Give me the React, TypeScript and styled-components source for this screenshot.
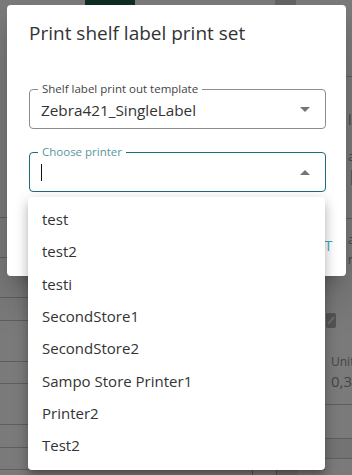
import React from "react";
import styled, { createGlobalStyle } from "styled-components";

const GlobalStyle = createGlobalStyle`
  html, body {
    margin: 0;
    padding: 0;
  }

  body {
    font-family: "Open Sans", "Liberation Sans", sans-serif;
    color: #333;
  }
`;

const Screen = styled.div`
  position: relative;
  width: 352px;
  height: 475px;
  overflow: hidden;
  background: #f5f5f5;
`;

// page behind the modal
const Page = styled.div`
  display: grid;
  grid-template-columns: 1fr 27px;
  height: 100%;
`;

const MainPane = styled.div`
  display: flex;
  flex-direction: column;
`;

const TopBar = styled.div`
  display: flex;
  align-items: flex-start;
  height: 60px;
  padding-left: 85px;
  gap: 140px;
`;

const TopBlock = styled.div<{ $width: number; $color: string }>`
  width: ${(props) => props.$width}px;
  height: 36px;
  background: ${(props) => props.$color};
`;

const TableRow = styled.div<{ $height: number }>`
  height: ${(props) => props.$height}px;
  border-bottom: 1px solid #bdbdbd;
  box-sizing: border-box;
`;

const Footer = styled.div`
  display: flex;
  padding-left: 252px;
  flex: 1;
`;

const FooterCell = styled.div<{ $width: number; $shade: boolean }>`
  width: ${(props) => props.$width}px;
  border-left: 1px solid #aaa;
  background: ${(props) => (props.$shade ? "#e4e4e4" : "transparent")};
`;

const SidePane = styled.div`
  display: flex;
  flex-direction: column;
  margin-left: -2px;
`;

const SideSection = styled.div<{ $height: number; $band?: boolean }>`
  height: ${(props) => props.$height}px;
  border-bottom: 1px solid #bdbdbd;
  box-sizing: border-box;
  background: ${(props) => (props.$band ? "#e6e6e6" : "transparent")};
  overflow: hidden;
  white-space: nowrap;
`;

const SideText = styled.div<{ $size: number; $top: number; $indent?: number }>`
  font-size: ${(props) => props.$size}px;
  line-height: 1.3;
  padding-top: ${(props) => props.$top}px;
  padding-left: ${(props) => props.$indent ?? 8}px;
  color: #8a8a8a;
`;

const EditBox = styled.div`
  width: 10px;
  height: 15px;
  margin: 46px 0 0 3px;
  border-radius: 2px;
  background: #ababab;
  display: flex;
  align-items: center;
  justify-content: center;

  &::before {
    content: "";
    width: 1.5px;
    height: 9px;
    background: #e0e0e0;
    transform: rotate(40deg);
  }
`;

// modal
const Backdrop = styled.div`
  position: absolute;
  inset: 0;
  background: rgba(0, 0, 0, 0.5);
`;

const Dialog = styled.div`
  position: absolute;
  left: 7px;
  top: 5px;
  width: 339px;
  height: 271px;
  background: #fff;
  border-radius: 4px;
  box-shadow: 0 11px 15px -7px rgba(0, 0, 0, 0.2), 0 24px 38px 3px rgba(0, 0, 0, 0.14);
  display: flex;
  flex-direction: column;
  box-sizing: border-box;
`;

const DialogTitle = styled.h2`
  margin: 0;
  padding: 13px 22px 0;
  font-size: 19px;
  font-weight: 400;
  line-height: 30px;
  color: #333;
`;

const DialogContent = styled.div`
  display: flex;
  flex-direction: column;
  gap: 23px;
  padding: 41px 20px 0 22px;
  flex: 1;
`;

const Field = styled.div<{ $focused?: boolean }>`
  position: relative;
  height: 40px;
  border: ${(props) => (props.$focused ? "1.5px solid #1d6c77" : "1px solid #8c8c8c")};
  border-radius: 4px;
  box-sizing: border-box;
  display: flex;
  align-items: center;
  padding: 0 11px;
`;

const FieldLabel = styled.span<{ $focused?: boolean }>`
  position: absolute;
  left: 8px;
  top: -9px;
  padding: 0 4px;
  background: #fff;
  font-size: 11.5px;
  line-height: 16px;
  color: ${(props) => (props.$focused ? "#5796a0" : "#444")};
`;

const FieldValue = styled.span`
  flex: 1;
  font-size: 15.3px;
  color: #333;
  padding-top: 1px;
`;

const Caret = styled.span`
  flex: 1;
  height: 17px;
  display: flex;
  align-items: center;

  &::before {
    content: "";
    width: 1px;
    height: 17px;
    background: #111;
  }
`;

const Arrow = styled.span<{ $up?: boolean }>`
  width: 0;
  height: 0;
  margin-right: 4px;
  border-left: 5px solid transparent;
  border-right: 5px solid transparent;
  ${(props) =>
    props.$up ? "border-bottom: 5px solid #757575;" : "border-top: 5px solid #757575;"}
`;

const DialogActions = styled.div`
  display: flex;
  justify-content: flex-end;
  gap: 8px;
  padding: 8px 5px 15px;
`;

const TextButton = styled.button`
  border: 0;
  background: none;
  padding: 6px 8px;
  font-family: inherit;
  font-size: 15px;
  font-weight: 500;
  letter-spacing: 0.5px;
  color: #47a9be;
  text-transform: uppercase;
`;

const Menu = styled.ul`
  position: absolute;
  left: 28px;
  top: 197px;
  width: 297px;
  height: 273px;
  margin: 0;
  padding: 6px 0 0;
  list-style: none;
  background: #fff;
  border-radius: 4px;
  box-sizing: border-box;
  box-shadow: 0 5px 5px -3px rgba(0, 0, 0, 0.2), 0 8px 10px 1px rgba(0, 0, 0, 0.14),
    0 3px 14px 2px rgba(0, 0, 0, 0.12);
`;

const MenuItem = styled.li`
  height: 32.3px;
  display: flex;
  align-items: center;
  padding-left: 14px;
  font-size: 15px;
  color: #333;
`;

const printers = [
  "test",
  "test2",
  "testi",
  "SecondStore1",
  "SecondStore2",
  "Sampo Store Printer1",
  "Printer2",
  "Test2",
];

const rowHeights = [158, 40, 40, 23, 41, 22, 41, 23, 22];

const App = () => {
  return (
    <Screen>
      <GlobalStyle />
      <Page>
        <MainPane>
          <TopBar>
            <TopBlock $width={50} $color="#1e5a44" />
            <TopBlock $width={21} $color="#c8c8c8" />
          </TopBar>
          {rowHeights.map((h, i) => (
            <TableRow key={i} $height={h} />
          ))}
          <Footer>
            <FooterCell $width={23} $shade={false} />
            <FooterCell $width={21} $shade />
          </Footer>
        </MainPane>
        <SidePane>
          <SideSection $height={77} />
          <SideSection $height={142}>
            <SideText $size={14} $top={34} $indent={25}>li</SideText>
            <SideText $size={12} $top={20} $indent={25}>a</SideText>
            <SideText $size={14} $top={2} $indent={25}>|</SideText>
          </SideSection>
          <SideSection $height={186}>
            <SideText $size={12} $top={13} $indent={25}>a</SideText>
            <SideText $size={12} $top={4} $indent={25}>n</SideText>
            <EditBox />
            <SideText $size={12} $top={26}>Unit</SideText>
            <SideText $size={15} $top={2}>0,33</SideText>
          </SideSection>
          <SideSection $height={34} />
          <SideSection $height={20} $band />
        </SidePane>
      </Page>

      <Backdrop />

      <Dialog role="dialog">
        <DialogTitle>Print shelf label print set</DialogTitle>
        <DialogContent>
          <Field>
            <FieldLabel>Shelf label print out template</FieldLabel>
            <FieldValue>Zebra421_SingleLabel</FieldValue>
            <Arrow />
          </Field>
          <Field $focused>
            <FieldLabel $focused>Choose printer</FieldLabel>
            <Caret />
            <Arrow $up />
          </Field>
        </DialogContent>
        <DialogActions>
          <TextButton>Cancel</TextButton>
          <TextButton>Print</TextButton>
        </DialogActions>
      </Dialog>

      <Menu role="listbox">
        {printers.map((name) => (
          <MenuItem key={name}>{name}</MenuItem>
        ))}
      </Menu>
    </Screen>
  );
};

export default App;
